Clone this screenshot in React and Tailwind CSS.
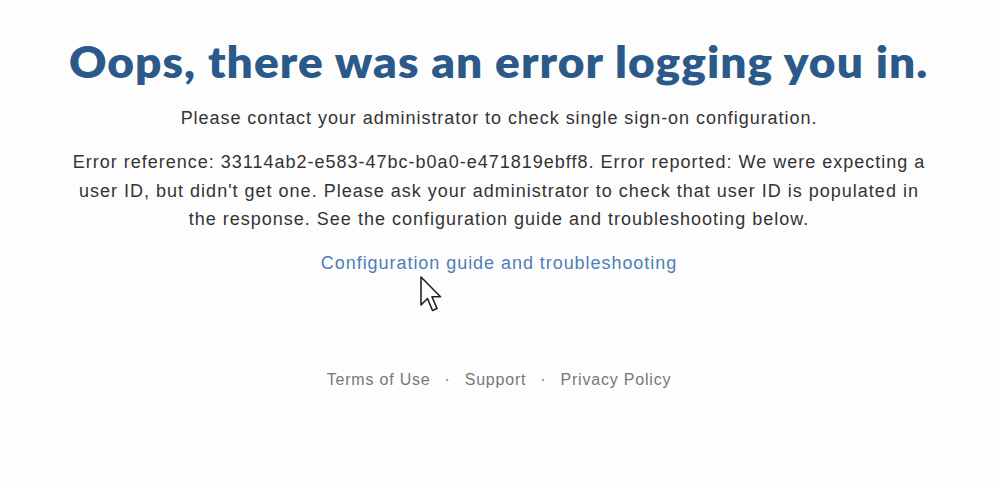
export default function App() {
  return (
    <div className="relative w-[998px] h-[488px] bg-[#fdfdfd] overflow-hidden" style={{ fontFamily: '"Liberation Sans", Arial, sans-serif' }}>
      <div className="flex flex-col items-center pt-[36px]">
        <h1 className="text-[43px] leading-[52px] font-extrabold text-[#2b5a8a] tracking-[1px] scale-x-[1.07]" style={{ fontFamily: 'Lato, "Open Sans", sans-serif' }}>
          Oops, there was an error logging you in.
        </h1>
        <p className="mt-[16px] text-[18px] leading-[28px] tracking-[0.95px] text-[#333]">
          Please contact your administrator to check single sign-on configuration.
        </p>
        <p className="mt-[16px] text-center text-[18px] leading-[28.5px] tracking-[1px] text-[#333] whitespace-nowrap">
          Error reference: 33114ab2-e583-47bc-b0a0-e471819ebff8. Error reported: We were expecting a<br />
          user ID, but didn't get one. Please ask your administrator to check that user ID is populated in<br />
          the response. See the configuration guide and troubleshooting below.
        </p>
        <a className="mt-[15px] text-[18px] leading-[28px] tracking-[0.95px] text-[#4f7db6]">
          Configuration guide and troubleshooting
        </a>
        <div className="mt-[89px] flex items-center gap-[14px] text-[16px] leading-[28px] tracking-[0.8px] text-[#777]">
          <span>Terms of Use</span>
          <span>·</span>
          <span>Support</span>
          <span>·</span>
          <span>Privacy Policy</span>
        </div>
      </div>
      <svg className="absolute left-[419px] top-[275px]" width="28" height="40" viewBox="0 0 28 40">
        <path d="M2 2 L2 30 L8.5 23.5 L13.5 35.5 L18 33.6 L13 21.8 L21.5 21.8 Z" fill="#fff" stroke="#222" strokeWidth="1.6" strokeLinejoin="round" />
      </svg>
    </div>
  );
}
